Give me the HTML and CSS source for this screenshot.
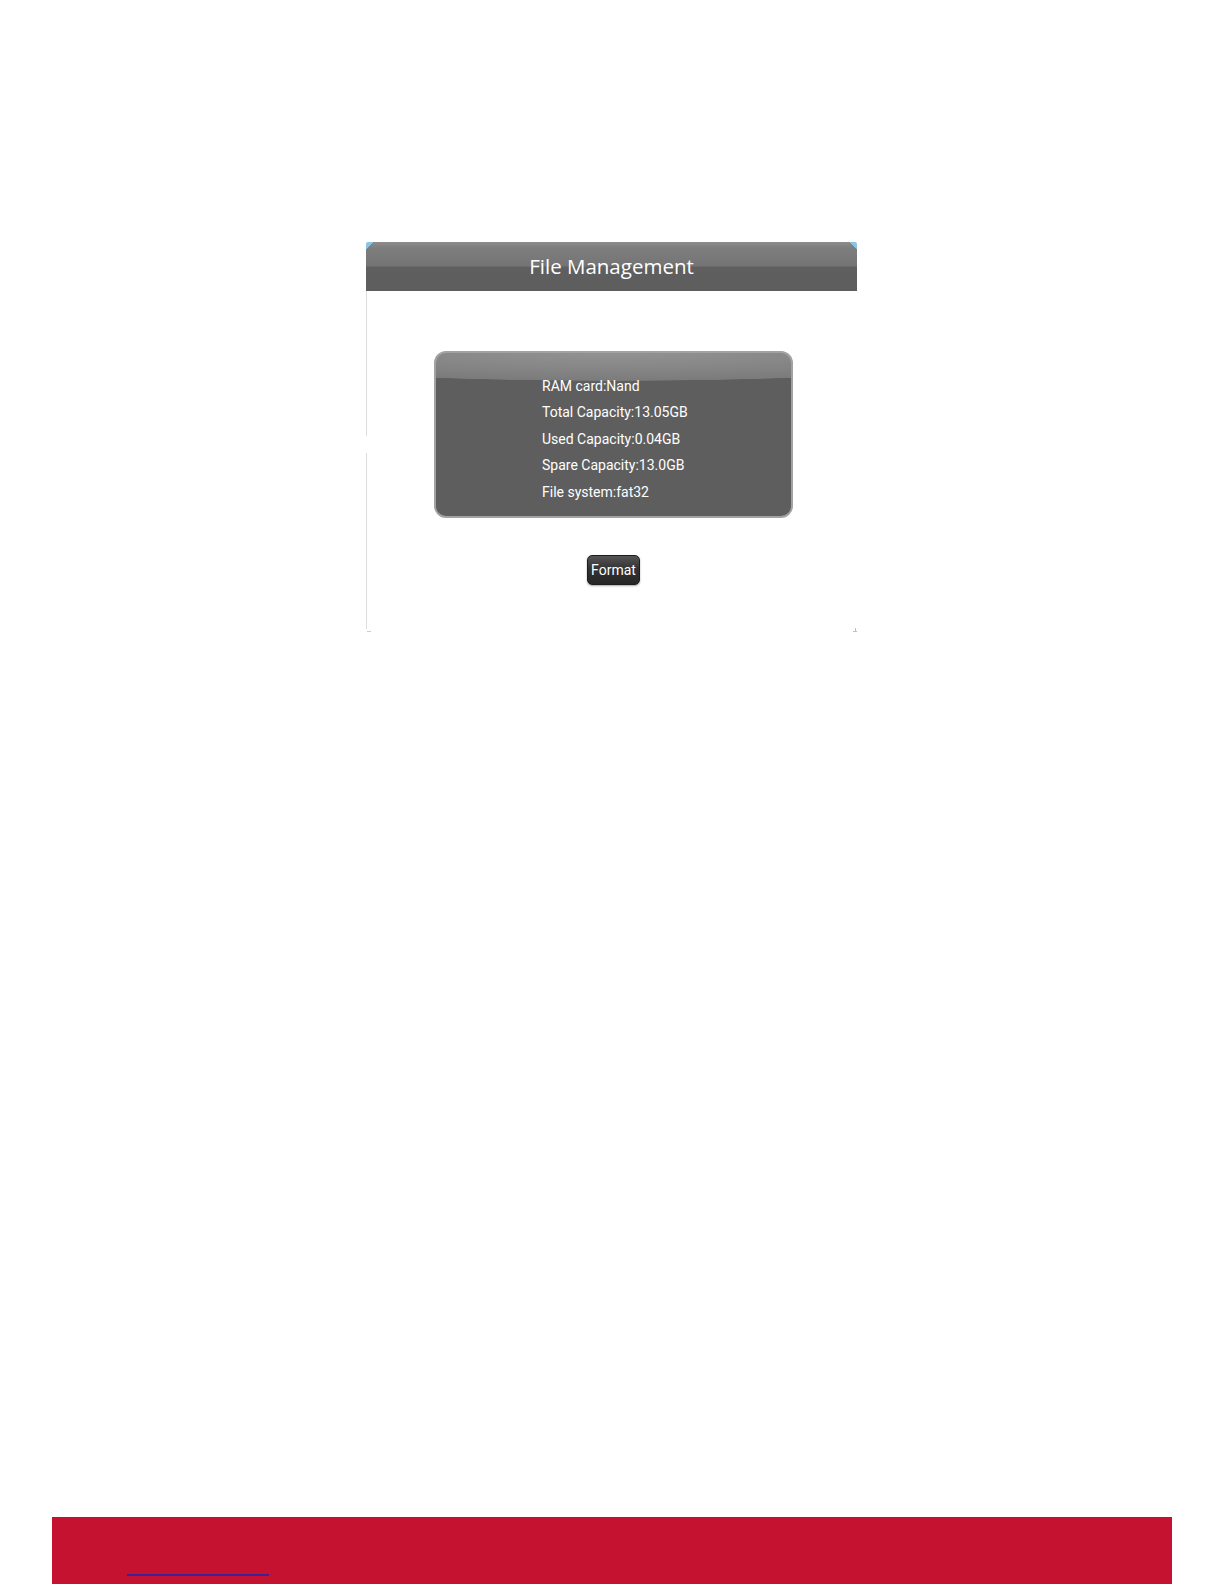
FILE: index.html
```html
<!DOCTYPE html>
<html>
<head>
<meta charset="utf-8">
<link rel="stylesheet" href="styles.css">
</head>
<body>
<div class="page">
  <div class="shot">
    <div class="titlebar">File Management</div>
    <div class="content">
      <div class="info">
        <div class="line">RAM card:Nand</div>
        <div class="line">Total Capacity:13.05GB</div>
        <div class="line">Used Capacity:0.04GB</div>
        <div class="line">Spare Capacity:13.0GB</div>
        <div class="line">File system:fat32</div>
      </div>
      <button class="format">Format</button>
    </div>
  </div>
  <div class="footer"><a class="link" href="#"></a></div>
</div>
</body>
</html>
```
FILE: styles.css
```css
html, body {
  margin: 0;
  padding: 0;
  background: #ffffff;
  overflow: hidden;
}
.page {
  height: 100vh;
  display: flex;
  flex-direction: column;
  padding-top: 242px;
  box-sizing: border-box;
  overflow: hidden;
}
.shot {
  margin-left: 366px;
  width: 491px;
}
.titlebar {
  height: 49px;
  box-sizing: border-box;
  background:
    linear-gradient(135deg, #8cc4e4 0, #8cc4e4 5px, rgba(0,0,0,0) 5px) left top / 8px 8px no-repeat,
    linear-gradient(225deg, #8cc4e4 0, #8cc4e4 5px, rgba(0,0,0,0) 5px) right top / 8px 8px no-repeat,
    linear-gradient(#8c8c8c 0px, #7e7e7e 6px, #747474 24px, #5f5f5f 25px, #5d5d5d 49px);
  border-top-left-radius: 2px;
  border-top-right-radius: 2px;
  color: #ffffff;
  font-family: "Open Sans", "DejaVu Sans", sans-serif;
  font-size: 20.5px;
  text-align: center;
  line-height: 49px;
}
.content {
  height: 341px;
  box-sizing: border-box;
  padding-top: 60px;
  display: flex;
  flex-direction: column;
  align-items: center;
  background-image:
    linear-gradient(#dddddd, #dddddd),
    linear-gradient(#dddddd, #dddddd),
    linear-gradient(#b8d8c8, #b8d8c8),
    linear-gradient(#a8ccc0, #a8ccc0),
    linear-gradient(#a8ccc0, #a8ccc0);
  background-size: 1px 145px, 1px 176px, 4px 1px, 4px 1px, 1px 4px;
  background-position: 0 0, 0 162px, 1px 340px, right 0 bottom 0, right 1px bottom 0;
  background-repeat: no-repeat;
}
.info {
  width: 359px;
  height: 167px;
  box-sizing: border-box;
  margin-left: 4px;
  border: 2px solid #a2a2a2;
  border-radius: 12px;
  background:
    radial-gradient(ellipse 400px 28px at 50% 0px, #929292 0%, #868686 55%, #7b7b7b 98%, rgba(94,94,94,0) 100%),
    #5e5e5e;
  padding: 20px 0 0 106px;
  font-family: Roboto, "Liberation Sans", sans-serif;
  font-size: 14px;
  color: #ffffff;
}
.line {
  line-height: 26.4px;
  height: 26.4px;
}
.format {
  margin-top: 37px;
  margin-left: 4px;
  width: 53px;
  height: 30px;
  padding: 0;
  border: 1px solid #1e1e1e;
  border-radius: 5px;
  background: linear-gradient(#555555, #333333 45%, #262626);
  color: #ffffff;
  font-family: Roboto, "Liberation Sans", sans-serif;
  font-size: 14px;
  box-shadow: 0 1px 2px rgba(0,0,0,0.35);
}
.footer {
  margin-top: auto;
  margin-left: 52px;
  width: 1120px;
  height: 67px;
  flex: none;
  background: #c41230;
  box-sizing: border-box;
  padding-left: 75px;
  padding-top: 57px;
}
.link {
  display: block;
  width: 142px;
  height: 0;
  border-bottom: 2px solid #3b229b;
}
```
